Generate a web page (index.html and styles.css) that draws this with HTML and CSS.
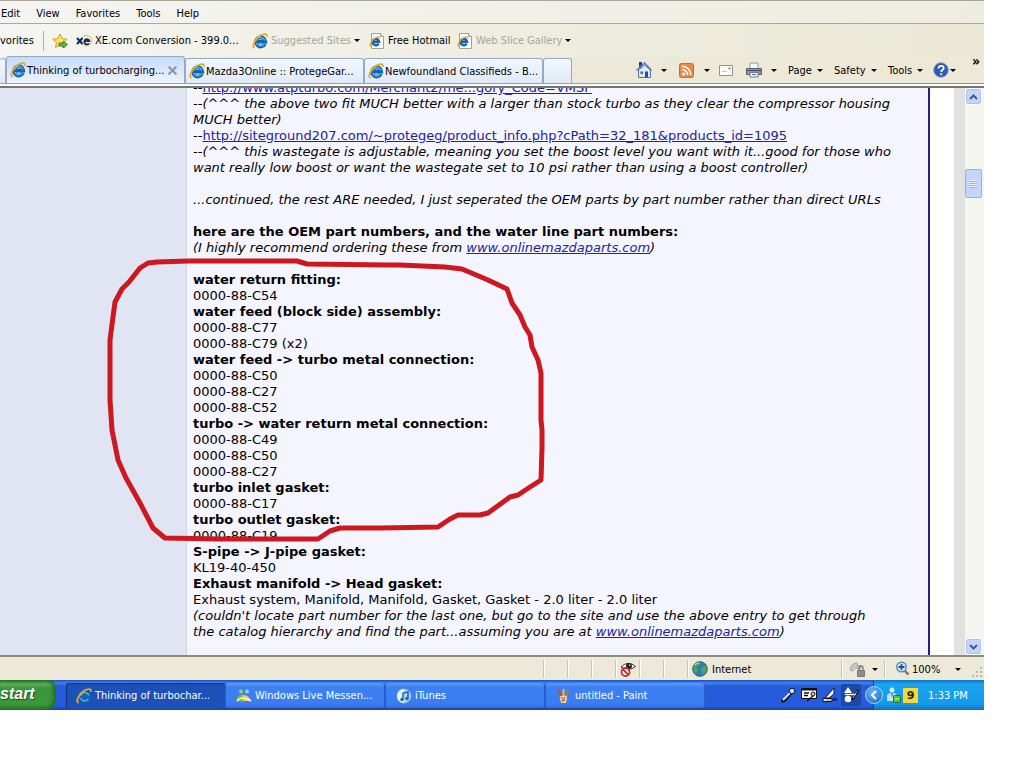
FILE: index.html
```
<!DOCTYPE html>
<html lang="en">
<head>
  <meta charset="UTF-8">
  <meta name="viewport" content="width=device-width, initial-scale=1.0">
  <title>Thinking of turbocharging</title>
  <link rel="stylesheet" href="styles.css">
</head>
<body>
  <svg class="symbols" aria-hidden="true">
    <symbol id="ie" viewBox="0 0 16 16">
      <path d="M13 10.800A4.700 4.700 0 1 1 13.400 8.600H5" fill="none" stroke="#1764ad" stroke-width="3.600"/>
      <path d="M12.400 10.600A4.300 4.300 0 0 1 4.600 10M4.600 7.600A4.300 4.300 0 0 1 12.800 7.600" fill="none" stroke="#4fb0ea" stroke-width="1.500"/>
      <path d="M2.600 15C-.8 13.600 2.800 6 8.400 2.600 11.600.6 15.600.2 14.800 3.800" fill="none" stroke="#e9a91f" stroke-width="1.800"/>
    </symbol>
    <symbol id="iepage" viewBox="0 0 16 16">
      <path d="M2.500.5h9l3 3v12h-12z" fill="#fff" stroke="#a3a39b"/>
      <path d="M11.500.5v3h3" fill="#ddd" stroke="#a3a39b"/>
      <path d="M9.600 10.600A3.200 3.200 0 1 1 10 8.800H4" fill="none" stroke="#1764ad" stroke-width="2.500"/>
      <path d="M1.600 13.400C-.4 12 3 7 6.600 5 9 3.600 11 3.400 10.600 5.400" fill="none" stroke="#e0a52c" stroke-width="1.300"/>
    </symbol>
  </svg>

  <div class="screen">
    <nav class="menubar">
      <button>Edit</button>
      <button>View</button>
      <button>Favorites</button>
      <button>Tools</button>
      <button>Help</button>
    </nav>

    <div class="favbar">
      <button class="fav-label">vorites</button>
      <button aria-label="Add to Favorites Bar">
        <svg class="icon" viewBox="0 0 16 16">
          <path d="M8 1l2.100 4.600 5 .5-3.700 3.400 1 5L8 12l-4.500 2.500 1-5L.8 6.100l5-.5z" fill="#ffe56b" stroke="#d49b1c"/>
          <path d="M7 10h4V8l4.500 3.500L11 15v-2H7z" fill="#58bb35" stroke="#2c7d1b" stroke-width=".8"/>
        </svg>
      </button>
      <button>
        <svg class="icon" viewBox="0 0 16 16">
          <circle cx="10.500" cy="7.500" r="5" fill="#fff" stroke="#f3c14b" stroke-width="1.300"/>
          <path d="M1 5l5.500 6M6.500 5L1 11" stroke="#0d2f63" stroke-width="2.200"/>
          <path d="M13 10.200A2.600 2.600 0 1 1 13.400 8.200H8" fill="none" stroke="#0d2f63" stroke-width="1.800"/>
        </svg>
        XE.com Conversion - 399.0...
      </button>
      <button class="dim"><svg class="icon"><use href="#ie"/></svg>Suggested Sites<span class="arrow"></span></button>
      <button><svg class="icon"><use href="#iepage"/></svg>Free Hotmail</button>
      <button class="dim"><svg class="icon"><use href="#iepage"/></svg>Web Slice Gallery<span class="arrow"></span></button>
    </div>

    <div class="tabrow">
      <div class="tabs">
        <button class="tab tab-stub" aria-label="Tab list"></button>
        <div class="tab active">
          <svg class="icon"><use href="#ie"/></svg>
          <a href="#post">Thinking of turbocharging...</a>
          <button class="close" aria-label="Close tab">
            <svg viewBox="0 0 8 8"><path d="M.5.5l7 7M7.500.5l-7 7" stroke="#8e959e" stroke-width="1.800"/></svg>
          </button>
        </div>
        <button class="tab"><svg class="icon"><use href="#ie"/></svg>Mazda3Online :: ProtegeGar...</button>
        <button class="tab"><svg class="icon"><use href="#ie"/></svg>Newfoundland Classifieds - B...</button>
        <button class="tab tab-new" aria-label="New tab"></button>
      </div>
      <div class="commands">
        <button aria-label="Home">
          <svg class="icon" viewBox="0 0 16 16">
            <path d="M3 0h3v6H3z" fill="#283d86"/>
            <path d="M2.500 8v7.500h12V8L8.500 3z" fill="#dfe8f7" stroke="#5870a5"/>
            <path d="M.5 8.500L8.500 1l7 7.500" fill="none" stroke="#5c78b4" stroke-width="1.500"/>
            <path d="M9 9.500h3v6H9z" fill="#284f9e"/>
            <path d="M4.500 9.500H7V12H4.500z" fill="#3f6ab3"/>
          </svg>
          <span class="arrow"></span>
        </button>
        <button aria-label="Feeds">
          <svg class="icon" viewBox="0 0 16 16">
            <rect x=".5" y="1.500" width="14" height="14" rx="2" fill="#e98a45" stroke="#c96a2b"/>
            <circle cx="4.500" cy="12" r="1.500" fill="#fff"/>
            <path d="M3 7.500a5.500 5.500 0 0 1 5.500 5.500M3 4.200a8.800 8.800 0 0 1 8.800 8.800" fill="none" stroke="#fff" stroke-width="1.600"/>
          </svg>
          <span class="arrow"></span>
        </button>
        <button aria-label="Mail">
          <svg class="icon" viewBox="0 0 16 16">
            <path d="M1.500 3.500h13v10h-13z" fill="#fbfbf8" stroke="#96938c"/>
            <path d="M10.500 5.500h2v2h-2z" fill="#d06a5a"/>
            <path d="M4 9.500h5" stroke="#c2c2c2"/>
          </svg>
        </button>
        <button aria-label="Print">
          <svg class="icon" viewBox="0 0 16 16">
            <path d="M4 1h8v6H4z" fill="#f6f8fb" stroke="#9a9a9a"/>
            <path d="M.5 6.500h15v6H.5z" fill="#90949c" stroke="#5d6068"/>
            <path d="M1 8.500h14" stroke="#4b4e55"/>
            <path d="M4 10.500h8v4.500H4z" fill="#eef4fd" stroke="#6d7e99"/>
            <path d="M6 12.500h4" stroke="#4578c0"/>
          </svg>
          <span class="arrow"></span>
        </button>
        <button>Page<span class="arrow"></span></button>
        <button>Safety<span class="arrow"></span></button>
        <button>Tools<span class="arrow"></span></button>
        <button aria-label="Help">
          <svg class="icon" viewBox="0 0 16 16">
            <circle cx="8" cy="8" r="7.300" fill="#3159ae" stroke="#8e9fc8"/>
            <path d="M5.500 6.500C5.500 3 10.700 3 10.700 6 10.700 8 8.200 8 8.200 10M8.200 11.200v1.800" fill="none" stroke="#fff" stroke-width="1.800"/>
          </svg>
          <span class="arrow"></span>
        </button>
        <button class="more">»</button>
      </div>
    </div>

    <main class="viewport">
      <div class="side"></div>
      <article class="post" id="post">
        <p>--<a href="#">http://www.atpturbo.com/Merchant2/me...gory_Code=VMSP</a><br>
        <i>--(^^^ the above two fit MUCH better with a larger than stock turbo as they clear the compressor housing<br>MUCH better)</i><br>
        --<a href="#">http://siteground207.com/~protegeg/product_info.php?cPath=32_181&amp;products_id=1095</a><br>
        <i>--(^^^ this wastegate is adjustable, meaning you set the boost level you want with it...good for those who<br>want really low boost or want the wastegate set to 10 psi rather than using a boost controller)</i></p>

        <p><i>...continued, the rest ARE needed, I just seperated the OEM parts by part number rather than direct URLs</i></p>

        <p><b>here are the OEM part numbers, and the water line part numbers:</b><br>
        <i>(I highly recommend ordering these from <a href="#">www.onlinemazdaparts.com</a>)</i></p>

        <p><b>water return fitting:</b><br>
        0000-88-C54<br>
        <b>water feed (block side) assembly:</b><br>
        0000-88-C77<br>
        0000-88-C79 (x2)<br>
        <b>water feed -&gt; turbo metal connection:</b><br>
        0000-88-C50<br>
        0000-88-C27<br>
        0000-88-C52<br>
        <b>turbo -&gt; water return metal connection:</b><br>
        0000-88-C49<br>
        0000-88-C50<br>
        0000-88-C27<br>
        <b>turbo inlet gasket:</b><br>
        0000-88-C17<br>
        <b>turbo outlet gasket:</b><br>
        0000-88-C19<br>
        <b>S-pipe -&gt; J-pipe gasket:</b><br>
        KL19-40-450<br>
        <b>Exhaust manifold -&gt; Head gasket:</b><br>
        Exhaust system, Manifold, Manifold, Gasket, Gasket - 2.0 liter - 2.0 liter<br>
        <i>(couldn't locate part number for the last one, but go to the site and use the above entry to get through<br>the catalog hierarchy and find the part...assuming you are at <a href="#">www.onlinemazdaparts.com</a>)</i></p>
      </article>
      <div class="gutter"></div>
      <div class="scrollbar">
        <button class="scroll-btn" aria-label="Scroll up"><svg viewBox="0 0 9 6"><path d="M1 5l3.500-3.500L8 5" fill="none" stroke="#3f5a90" stroke-width="2"/></svg></button>
        <div class="track"><div class="thumb"></div></div>
        <button class="scroll-btn" aria-label="Scroll down"><svg viewBox="0 0 9 6"><path d="M1 1l3.500 3.500L8 1" fill="none" stroke="#3f5a90" stroke-width="2"/></svg></button>
      </div>

      <!-- hand drawn circle over the coolant parts -->
      <svg class="scribble" viewBox="100 250 460 300" aria-hidden="true">
        <path d="M157 262L188 261L297 261L307 264L390 265L400 265L445 267L462 269L488 280L507 289L512 303L520 315L525 327L530 335L532 347L538 360L541 373L541 420L542 430L542 448L541 480L530 487L518 495L510 497L488 513L480 515L458 515L450 519L438 527L380 528L340 528L330 531L318 539L220 539L165 538L153 528L140 503L126 478L118 460L112 430L110 400L110 340L113 317L115 302L122 289L129 282L140 268L148 263Z"/>
      </svg>
    </main>

    <footer class="statusbar">
      <div class="cell grow"></div>
      <div class="cell"></div>
      <div class="cell"></div>
      <div class="cell"></div>
      <div class="cell">
        <svg class="icon" viewBox="0 0 16 16">
          <path d="M1 6Q8-1 15.500 5.500Q8 11 1 6z" fill="#fff" stroke="#333"/>
          <circle cx="9" cy="5" r="3" fill="#222"/>
          <circle cx="9.800" cy="4.200" r=".8" fill="#fff"/>
          <circle cx="5.500" cy="11" r="4" fill="#fff" stroke="#cb2e26" stroke-width="1.800"/>
          <path d="M3 8.500l5 5" stroke="#cb2e26" stroke-width="1.800"/>
        </svg>
      </div>
      <div class="cell"></div>
      <div class="cell"></div>
      <div class="cell zone">
        <svg class="icon" viewBox="0 0 16 16">
          <circle cx="8" cy="8" r="7.300" fill="#3478b8" stroke="#375f78"/>
          <path d="M2 4q4-4 7-2.500L7 5 4 6l2 3-2 4Q0 9 2 4zM9 7l4-3q3 4 1 7l-3 3-2-3z" fill="#49a557"/>
          <path d="M3 4q2-2 4-2" stroke="#b9e7ee" fill="none"/>
        </svg>
        Internet
      </div>
      <button class="cell lock" aria-label="Protected mode">
        <svg class="icon" viewBox="0 0 16 16">
          <path d="M0 9Q1 2 7 2v3q3-2 4 3L7 7Q4 6 3 10z" fill="#c9c9c4" stroke="#a4a49e"/>
          <path d="M7.500 9.500h7v6h-7z" fill="#8e8e88" stroke="#777"/>
          <path d="M9 9V7a2 2 0 0 1 4 0v2" fill="none" stroke="#777" stroke-width="1.300"/>
        </svg>
        <span class="arrow"></span>
      </button>
      <button class="cell zoom">
        <svg class="icon" viewBox="0 0 16 16">
          <path d="M9.500 9.500l4 4" stroke="#8a6a52" stroke-width="2.400"/>
          <circle cx="6.500" cy="6" r="4.800" fill="#d9ecfc" stroke="#5b86bd" stroke-width="1.400"/>
          <path d="M6.500 3v6M3.500 6h6" stroke="#1e4f9c" stroke-width="1.800"/>
        </svg>
        100%<span class="arrow"></span>
        <svg class="grip" viewBox="0 0 10 10"><path d="M8 0h2v2H8zM4 4h2v2H4zM8 4h2v2H8zM0 8h2v2H0zM4 8h2v2H4zM8 8h2v2H8z" fill="#bdb9a4"/></svg>
      </button>
    </footer>

    <div class="taskbar">
      <button class="start">start</button>
      <div class="tasks">
        <button class="task pressed"><svg class="icon"><use href="#ie"/></svg>Thinking of turbochar...</button>
        <button class="task">
          <svg class="icon" viewBox="0 0 16 16">
            <circle cx="5" cy="3.500" r="2" fill="#8bd66a"/>
            <circle cx="11" cy="3.500" r="2" fill="#8fd4f4"/>
            <path d="M0 13q1-7 6-6.500Q10 7 10 12l-4 2z" fill="#6bb84c"/>
            <path d="M6 7q7-1 9 6H7z" fill="#f0c660"/>
            <path d="M1 13q5-6 14 0" fill="none" stroke="#fff1bd" stroke-width="1.600"/>
          </svg>
          Windows Live Messen...
        </button>
        <button class="task">
          <svg class="icon" viewBox="0 0 16 16">
            <circle cx="8" cy="8" r="7" fill="#a9d4ea" stroke="#8db7cf"/>
            <path d="M8 1a7 7 0 0 0 0 14z" fill="#e3f3dd"/>
            <path d="M7 11.500V5l5-1v6.500" fill="none" stroke="#2462b8" stroke-width="1.500"/>
            <circle cx="6" cy="11.500" r="1.700" fill="#2462b8"/>
            <circle cx="11" cy="10.500" r="1.700" fill="#2462b8"/>
          </svg>
          iTunes
        </button>
        <button class="task">
          <svg class="icon" viewBox="0 0 16 16">
            <path d="M3 7h9l-1.500 8.500h-6z" fill="#d9dde6" stroke="#6b7387"/>
            <path d="M5 8L2.500 1.500" stroke="#d8412f" stroke-width="2"/>
            <path d="M7.500 8V1" stroke="#e9c13c" stroke-width="2"/>
            <path d="M10 8l2.500-6" stroke="#b9763a" stroke-width="2"/>
            <path d="M5 9l4 4M9 9l-3 5" stroke="#c7772e" stroke-width="1.500"/>
          </svg>
          untitled - Paint
        </button>
      </div>
      <div class="langbar">
        <button aria-label="Microphone">
          <svg class="icon" viewBox="0 0 16 16"><path d="M1.500 14.500l3-1L11 6" fill="none" stroke="#111" stroke-width="3"/><path d="M3 13l8-8" stroke="#e8e8e8" stroke-width="1.800"/><circle cx="12" cy="4" r="2.800" fill="#dcdcdc" stroke="#111"/></svg>
        </button>
        <button aria-label="Text tools">
          <svg class="icon" viewBox="0 0 16 16"><path d="M.5 1.500h15v10H.5z" fill="#fff" stroke="#111"/><path d="M.5 2.500h15" stroke="#111" stroke-width="2"/><path d="M3 6h5M3 8.500h4M6 14l6-5" stroke="#111" stroke-width="1.300"/><circle cx="12" cy="7" r="2" fill="#ccc" stroke="#111"/></svg>
        </button>
        <button aria-label="Handwriting">
          <svg class="icon" viewBox="0 0 16 16"><path d="M3 11L12 1v6l-5 4z" fill="#fff" stroke="#111"/><path d="M1 11.500h9v3H1z" fill="#f4f4e4" stroke="#111"/><path d="M11 11h4v3h-4z" fill="#152a8a"/><path d="M4 13h5" stroke="#8c9a3c"/></svg>
        </button>
        <button class="on" aria-label="Drawing pad">
          <svg class="icon" viewBox="0 0 16 16"><path d="M5 0l4 6H1z" fill="#fff"/><circle cx="5" cy="12" r="3.300" fill="#fff"/><path d="M9 13l6-10" stroke="#111" stroke-width="2.400"/><path d="M2 7.500h11" stroke="#fff" stroke-width="1.300"/><path d="M10 11l4-7" stroke="#d98a7c"/></svg>
        </button>
      </div>
      <div class="tray">
        <button class="chevron" aria-label="Show hidden icons"><svg viewBox="0 0 8 10"><path d="M6 1L2 5l4 4" fill="none" stroke="#fff" stroke-width="2"/></svg></button>
        <svg class="icon" viewBox="0 0 16 16"><circle cx="6" cy="3" r="2.500" fill="#d6eef8"/><path d="M1 14V9q0-3 5-3t5 3v5z" fill="#bfe3f2"/><path d="M5 6.500h2L6 11z" fill="#2c80bd"/><rect x="7.500" y="8.500" width="7" height="7" rx="1" fill="#55c13d" stroke="#1f7a1c"/><path d="M9 12h4" stroke="#d6ffce"/></svg>
        <span class="nine">9</span>
        <time>1:33 PM</time>
      </div>
    </div>
  </div>
</body>
</html>
```
FILE: styles.css
```
* {
  margin: 0;
  padding: 0;
  box-sizing: border-box;
}

body {
  background: #fff;
  font-family: "DejaVu Sans Condensed", "DejaVu Sans", sans-serif;
  font-size: 11px;
  color: #000;
}

button {
  background: none;
  border: none;
  font: inherit;
  color: inherit;
  white-space: nowrap;
}

.symbols {
  display: none;
}

.icon {
  width: 16px;
  height: 16px;
  flex: none;
}

.arrow {
  border: 3px solid transparent;
  border-top-color: #000;
  border-bottom: none;
  flex: none;
}

/* The desktop leaves a white strip to the right and below */
.screen {
  display: flex;
  flex-direction: column;
  height: calc(100vh - 58px);
  margin-right: 40px;
  overflow: hidden;
}

/* Menu */
.menubar {
  display: flex;
  gap: 16px;
  height: 24px;
  padding: 2px 0 0 1px;
  background: linear-gradient(to right, #f4f4f2, #eeece0);
  border-top: 1px solid #aaa797;
  border-bottom: 1px solid #aaa9a0;
}

/* Favorites bar */
.favbar {
  display: grid;
  grid-template-columns: 44px 32px 176px 117px 88px 1fr;
  align-items: center;
  height: 33px;
  background: linear-gradient(to right, #f5f5f2, #eeecdd 60%, #ebe8d6);
}

.favbar button {
  display: flex;
  align-items: center;
  gap: 3px;
}

.favbar .fav-label {
  height: 20px;
  border-right: 1px solid #b5b3a9;
}

.favbar .fav-label + button {
  padding-left: 8px;
}

.favbar .dim {
  color: #a5a39a;
}

/* Tabs */
.tabrow {
  display: flex;
  justify-content: space-between;
  height: 31px;
  background: linear-gradient(to right, #f3f3ef, #ece9d8 60%);
  border-bottom: 2px solid #77776b;
}

.tabs {
  display: flex;
  align-items: flex-end;
  flex: 1;
  height: 26px;
  box-shadow: 0 1px #94a0af, 0 3px #fafafa;
}

.tab {
  display: flex;
  align-items: center;
  gap: 1px;
  width: 179px;
  height: 25px;
  padding-left: 3px;
  background: linear-gradient(#f1f6fc, #dfeaf8);
  border: 1px solid #98aac0;
  border-bottom: none;
  border-radius: 3px 3px 0 0;
}

.tab.active {
  height: 27px;
  background: linear-gradient(#c5dafb, #eef4fd);
}

.tab a {
  flex: 1;
  color: inherit;
  text-decoration: none;
  white-space: nowrap;
}

.tab .close {
  width: 9px;
  height: 9px;
  margin-right: 7px;
}

.close svg {
  display: block;
}

.tab-stub {
  width: 6px;
  border-left: none;
}

.tab-new {
  width: 29px;
}

.commands {
  display: grid;
  grid-template-columns: 43px 39px 28px 42px 46px 54px 45px 35px 16px;
  height: 26px;
  box-shadow: 0 1px #94948a, 0 3px #fafafa;
}

.commands button {
  display: flex;
  align-items: center;
  gap: 5px;
}

.commands .icon + .arrow {
  margin-left: 4px;
}

.commands [aria-label="Help"] {
  gap: 0;
}

.commands [aria-label="Help"] .arrow {
  margin-left: 1px;
}

.commands .more {
  align-items: flex-start;
  justify-content: center;
  font-size: 14px;
  font-weight: bold;
  line-height: 8px;
}

/* Page */
.viewport {
  position: relative;
  display: flex;
  flex: 1;
  min-height: 0;
  overflow: hidden;
  background: #fff;
}

.side {
  width: 187px;
  background: #e1e4f2;
  border-right: 1px solid #d2d4e2;
}

.post {
  display: flex;
  flex: 1;
  flex-direction: column;
  justify-content: flex-end;
  gap: 16px;
  padding: 0 8px 15px 6px;
  background: #f5f5ff;
  border-right: 2px solid #23237c;
  font-family: "DejaVu Sans", Verdana, sans-serif;
  font-size: 13px;
  line-height: 16px;
}

.post a {
  color: #22229c;
}

.gutter {
  width: 35px;
  border-right: 11px solid #e1e1e1;
}

.scrollbar {
  display: flex;
  flex-direction: column;
  width: 19px;
  padding: 0 2px 0 0;
  background: #f5f5f0;
}

.scroll-btn {
  display: flex;
  align-items: center;
  justify-content: center;
  height: 17px;
  background: #c3d5fd;
  border: 1px solid #fff;
  border-radius: 3px;
  box-shadow: inset 0 0 0 1px #aebfe9;
}

.scroll-btn svg {
  width: 9px;
}

.track {
  flex: 1;
  padding-top: 64px;
}

.thumb {
  height: 29px;
  background: repeating-linear-gradient(#eef4fe 0 1px, #8cb0f8 1px 2px) center / 7px 8px no-repeat, #c3d5fd;
  border: 1px solid #98b1e4;
  border-radius: 2px;
}

.scribble {
  position: absolute;
  left: 100px;
  top: 162px;
  width: 460px;
  height: 300px;
  pointer-events: none;
}

.scribble path {
  fill: none;
  stroke: #cc181e;
  stroke-width: 5px;
  stroke-linejoin: round;
}

/* Status bar */
.statusbar {
  display: flex;
  height: 25px;
  padding: 3px 0 2px;
  background: #ece9d8;
  border-top: 2px solid #8d8b7d;
}

.cell {
  display: flex;
  align-items: center;
  gap: 4px;
  width: 24px;
  padding-left: 4px;
  border-right: 1px solid #c8c5b2;
  box-shadow: 1px 0 #fff;
}

.grow {
  flex: 1;
}

.zone {
  width: 154px;
}

.lock {
  width: 43px;
  padding-left: 8px;
  gap: 6px;
}

.zoom {
  width: 99px;
  padding-left: 10px;
  gap: 1px;
  border: none;
  box-shadow: none;
}

.zoom .arrow {
  margin-left: 14px;
}

.grip {
  width: 10px;
  margin: 6px 2px 0 auto;
}

/* Taskbar */
.taskbar {
  display: flex;
  height: 30px;
  color: #fff;
  background: linear-gradient(#1d4fb4, #3f83ee 3px, #265bd8 6px, #245add 26px, #1941a5);
}

.start {
  display: flex;
  align-items: center;
  width: 56px;
  padding-bottom: 2px;
  background: linear-gradient(#2c6f2c, #5cb25a 4px, #3c963a 8px, #3a9a38 24px, #2a762b);
  border-radius: 0 8px 10px 0;
  box-shadow: inset -3px 0 4px #24682a;
  font: italic bold 16px "Liberation Sans", Arial, sans-serif;
  text-shadow: 1px 1px 1px #204a20;
}

.tasks {
  display: flex;
  flex: 1;
  gap: 1px;
  padding: 3px 0 2px 10px;
}

.task {
  display: flex;
  align-items: center;
  gap: 3px;
  width: 159px;
  padding-left: 10px;
  background: linear-gradient(#5b9bfb, #3c81f3 4px, #3a7cf0 22px, #2f69d8);
  border-radius: 2px;
  box-shadow: inset -1px 0 #2a5fc8;
}

.pressed {
  background: #1d50b8;
  box-shadow: inset 1px 1px 1px #12357e;
}

.langbar {
  display: flex;
  align-items: center;
  gap: 1px;
  padding-right: 12px;
}

.langbar button {
  display: flex;
  align-items: center;
  justify-content: center;
  width: 20px;
  height: 22px;
}

.langbar .on {
  background: #1c49a8;
  border-radius: 2px;
}

.tray {
  display: flex;
  align-items: center;
  width: 111px;
  background: linear-gradient(#1273c4, #1ba4ee 4px, #149aeb 24px, #0f6fc0);
  border-left: 1px solid #0c4ba3;
}

.chevron {
  display: flex;
  align-items: center;
  justify-content: center;
  width: 18px;
  height: 18px;
  margin: 0 3px 0 -9px;
  background: radial-gradient(circle at 40% 30%, #65b4f8, #1664cc);
  border: 1px solid #a8d7f8;
  border-radius: 50%;
}

.chevron svg {
  width: 8px;
}

.nine {
  width: 15px;
  margin-left: 1px;
  background: #f8d832;
  color: #222;
  font: bold 11px/15px "DejaVu Sans", sans-serif;
  text-align: center;
}

.tray time {
  margin-left: 10px;
}
```
